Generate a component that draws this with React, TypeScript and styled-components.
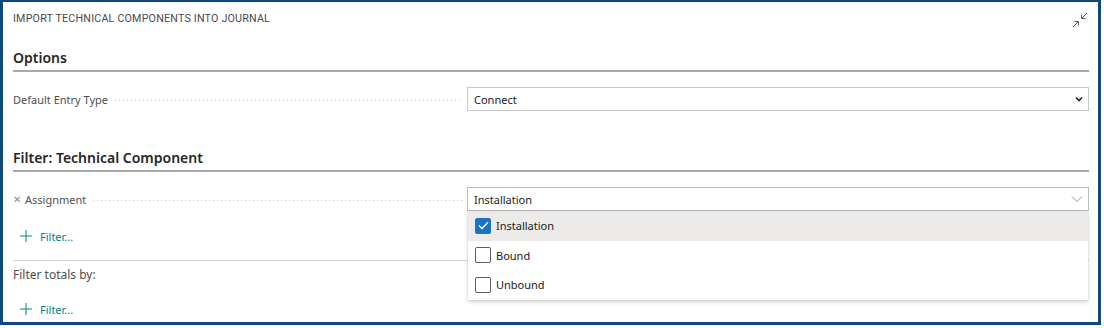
import React from 'react';
import styled, { createGlobalStyle } from 'styled-components';

const GlobalStyle = createGlobalStyle`
  html, body {
    margin: 0;
    padding: 0;
    background: #ffffff;
  }
  body {
    font-family: "Noto Sans", "Open Sans", sans-serif;
    color: #505050;
  }
`;

/* Frame & header */
const Frame = styled.div`
  box-sizing: border-box;
  width: 1101px;
  height: 325px;
  border: 3px solid #0f4a7f;
  border-top-width: 2px;
  padding: 0 9px 0 10px;
  display: flex;
  flex-direction: column;
  overflow: hidden;
`;

const Header = styled.div`
  height: 32px;
  display: flex;
  align-items: center;
  justify-content: space-between;
`;

const Caption = styled.div`
  font-family: Roboto, "Noto Sans", sans-serif;
  font-size: 10.7px;
  letter-spacing: 0.2px;
  color: #4a4a4a;
  padding-top: 1px;
`;

const CollapseButton = styled.button`
  border: 0;
  background: none;
  padding: 0;
  margin: 4px 0 0 0;
  width: 18px;
  height: 18px;
  display: flex;
  align-items: center;
  justify-content: center;
`;

/* Sections */
const SectionTitle = styled.div<{ $top: number }>`
  margin-top: ${(p) => p.$top}px;
  font-size: 14px;
  font-weight: 600;
  color: #262626;
  height: 24px;
  line-height: 24px;
  border-bottom: 2px solid #a8a8a8;
`;

const Row = styled.div<{ $top: number }>`
  margin-top: ${(p) => p.$top}px;
  display: grid;
  grid-template-columns: 1fr 622px;
  column-gap: 5px;
  align-items: center;
  height: 24px;
  position: relative;
`;

const Label = styled.div`
  display: flex;
  align-items: center;
  font-size: 11px;
  color: #505050;
  min-width: 0;
`;

const Remove = styled.span`
  font-size: 10px;
  color: #8a8a8a;
  margin-right: 4px;
`;

const Leader = styled.span`
  flex: 1;
  height: 1px;
  margin: 2px 0 0 7px;
  background-image: linear-gradient(to right, #c8c8c8 1px, transparent 1px);
  background-size: 4px 1px;
  background-repeat: repeat-x;
`;

const Field = styled.div`
  position: relative;
  height: 24px;
`;

const SelectBox = styled.div<{ $open?: boolean }>`
  box-sizing: border-box;
  height: 24px;
  border: 1px solid ${(p) => (p.$open ? '#bcbcbc' : '#c8c8c8')};
  display: flex;
  align-items: center;
  justify-content: space-between;
  padding: 0 5px 0 6px;
  font-size: 11px;
  color: #212121;
  background: #fff;
`;

const Menu = styled.div`
  position: absolute;
  top: 24px;
  left: 1px;
  right: 1px;
  background: #fff;
  box-shadow: 0 2px 4px rgba(0, 0, 0, 0.18), 0 0 1px rgba(0, 0, 0, 0.15);
  z-index: 2;
`;

const Option = styled.div<{ $active?: boolean }>`
  height: 29.5px;
  display: flex;
  align-items: center;
  padding-left: 7px;
  gap: 5px;
  font-size: 11px;
  color: #212121;
  background: ${(p) => (p.$active ? '#edebe9' : '#fff')};
`;

const Box = styled.span<{ $checked?: boolean }>`
  box-sizing: border-box;
  width: 16px;
  height: 16px;
  border-radius: 2px;
  border: 1px solid ${(p) => (p.$checked ? '#1a73c8' : '#5e5e5e')};
  background: ${(p) => (p.$checked ? '#1a73c8' : '#fff')};
  display: flex;
  align-items: center;
  justify-content: center;
`;

const AddFilter = styled.div<{ $top: number }>`
  margin-top: ${(p) => p.$top}px;
  display: flex;
  align-items: center;
  gap: 8px;
  padding-left: 7px;
  font-size: 11px;
  color: #00838a;
  height: 16px;
`;

const Divider = styled.div<{ $top: number }>`
  margin-top: ${(p) => p.$top}px;
  border-top: 1px solid #d4d4d4;
`;

const Plain = styled.div<{ $top: number }>`
  margin-top: ${(p) => p.$top}px;
  font-size: 12px;
  color: #505050;
  height: 16px;
  line-height: 16px;
`;

/* Icons */
const CollapseIcon = () => (
  <svg width="16" height="16" viewBox="0 0 16 16" fill="none" stroke="#5a5a5a" strokeWidth="1">
    <path d="M15 1 L9.5 6.5 M9.5 2.5 V6.5 H13.5" />
    <path d="M1 15 L6.5 9.5 M2.5 9.5 H6.5 V13.5" />
  </svg>
);

const Chevron = ({ light }: { light?: boolean }) =>
  light ? (
    <svg width="12" height="8" viewBox="0 0 12 8" fill="none" stroke="#9a9a9a" strokeWidth="1">
      <path d="M1 1.5 L6 6.5 L11 1.5" />
    </svg>
  ) : (
    <svg width="8" height="6" viewBox="0 0 8 6" fill="none" stroke="#212121" strokeWidth="1.6">
      <path d="M1 1.5 L4 4.5 L7 1.5" />
    </svg>
  );

const Check = () => (
  <svg width="11" height="9" viewBox="0 0 11 9" fill="none" stroke="#fff" strokeWidth="1.3">
    <path d="M1 4.5 L4 7.5 L10 1.2" />
  </svg>
);

const Plus = () => (
  <svg width="12" height="12" viewBox="0 0 12 12" fill="none" stroke="#00838a" strokeWidth="1">
    <path d="M6 0 V12 M0 6 H12" />
  </svg>
);

const options = [
  { label: 'Installation', checked: true },
  { label: 'Bound', checked: false },
  { label: 'Unbound', checked: false },
];

export default function App() {
  return (
    <>
      <GlobalStyle />
      <Frame>
        <Header>
          <Caption>IMPORT TECHNICAL COMPONENTS INTO JOURNAL</Caption>
          <CollapseButton aria-label='Collapse'>
            <CollapseIcon />
          </CollapseButton>
        </Header>

        <SectionTitle $top={12}>Options</SectionTitle>
        <Row $top={15}>
          <Label>
            Default Entry Type
            <Leader />
          </Label>
          <Field>
            <SelectBox>
              Connect
              <Chevron />
            </SelectBox>
          </Field>
        </Row>

        <SectionTitle $top={35}>Filter: Technical Component</SectionTitle>
        <Row $top={15}>
          <Label>
            <Remove>✕</Remove>
            Assignment
            <Leader />
          </Label>
          <Field>
            <SelectBox $open>
              Installation
              <Chevron light />
            </SelectBox>
            <Menu>
              {options.map((o) => (
                <Option key={o.label} $active={o.checked}>
                  <Box $checked={o.checked}>{o.checked && <Check />}</Box>
                  {o.label}
                </Option>
              ))}
            </Menu>
          </Field>
        </Row>

        <AddFilter $top={17}>
          <Plus />
          Filter...
        </AddFilter>
        <Divider $top={16} />
        <Plain $top={6}>Filter totals by:</Plain>
        <AddFilter $top={18}>
          <Plus />
          Filter...
        </AddFilter>
      </Frame>
    </>
  );
}
